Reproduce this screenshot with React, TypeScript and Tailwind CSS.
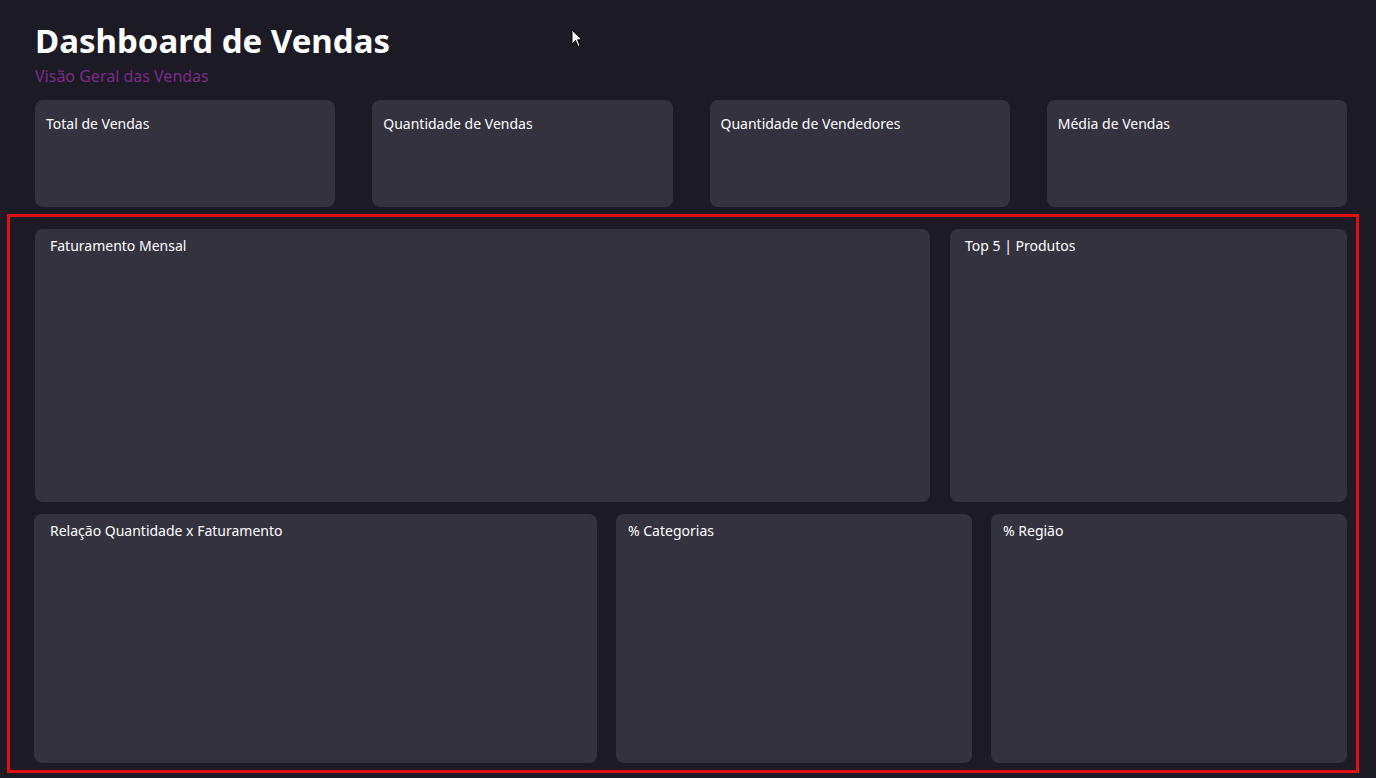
export default function App() {
  const kpis = ["Total de Vendas", "Quantidade de Vendas", "Quantidade de Vendedores", "Média de Vendas"];
  const card = "rounded-lg bg-[#34323f] text-white text-[14px]";

  return (
    <div className="relative min-h-[778px] w-[1376px] bg-[#1c1a24] font-['Open_Sans',sans-serif]">
      <div className="pl-[35px] pr-[29px] pt-[22px]">
        <h1 className="text-[33px] font-bold leading-[38px] text-white">Dashboard de Vendas</h1>
        <p className="mt-[6px] text-[16px] leading-[20px] text-[#7b2a8a]">Visão Geral das Vendas</p>
        <div className="mt-[14px] grid grid-cols-4 gap-[37px]">
          {kpis.map((k) => (
            <div key={k} className={`${card} h-[107px] px-[11px] pt-[13px]`}>
              {k}
            </div>
          ))}
        </div>
      </div>

      <div className="ml-[7px] mr-[17px] mt-[7px] border-[3px] border-[#e01010] pb-[7px] pl-[25px] pr-[9px] pt-[12px]">
        <div className="grid grid-cols-[895px_1fr] gap-[20px]">
          <div className={`${card} h-[273px] px-[15px] pt-[6px]`}>Faturamento Mensal</div>
          <div className={`${card} h-[273px] px-[15px] pt-[6px]`}>Top 5 | Produtos</div>
        </div>
        <div className="mt-[12px] -ml-px grid grid-cols-[563px_356px_1fr] gap-[19px]">
          <div className={`${card} h-[249px] px-[16px] pt-[6px]`}>Relação Quantidade x Faturamento</div>
          <div className={`${card} h-[249px] px-[12px] pt-[6px]`}>% Categorias</div>
          <div className={`${card} h-[249px] px-[12px] pt-[6px]`}>% Região</div>
        </div>
      </div>

      <svg className="absolute left-[571px] top-[29px]" width="12" height="19" viewBox="0 0 12 19">
        <path d="M1 1 L1 15 L4.5 11.5 L7 17.5 L9 16.6 L6.6 10.8 L11 10.8 Z" fill="#fff" stroke="#000" strokeWidth="1" />
      </svg>
    </div>
  );
}
